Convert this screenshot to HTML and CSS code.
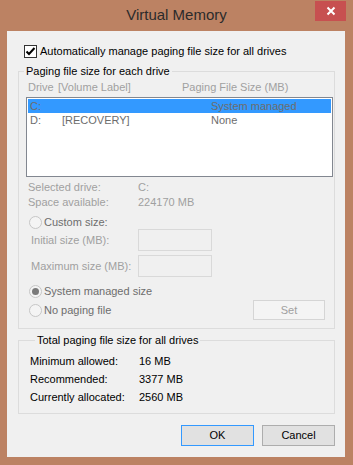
FILE: index.html
```html
<!DOCTYPE html>
<html lang="en">
<head>
    <meta charset="UTF-8">
    <meta name="viewport" content="width=device-width, initial-scale=1.0">
    <title>Virtual Memory</title>
    <link rel="stylesheet" href="styles.css">
</head>
<body>
    <div class="window">
        <div class="titlebar">
            <span></span>
            <h1 class="title">Virtual Memory</h1>
            <button class="close-btn" aria-label="Close">
                <svg width="10" height="10" viewBox="0 0 10 10">
                    <path d="M1.5 1.5 L8.5 8.5 M8.5 1.5 L1.5 8.5" stroke="#fff" stroke-width="2" fill="none"/>
                </svg>
            </button>
        </div>
        <div class="client">
            <label class="check-row">
                <span class="checkbox">
                    <svg width="11" height="11" viewBox="0 0 11 11">
                        <path d="M1.5 5.5 L4 8 L9.5 2" stroke="#000" stroke-width="2" fill="none"/>
                    </svg>
                </span>
                Automatically manage paging file size for all drives
            </label>

            <fieldset class="group">
                <legend>Paging file size for each drive</legend>
                <div class="list-header">
                    <span>Drive</span>
                    <span>[Volume Label]</span>
                    <span>Paging File Size (MB)</span>
                </div>
                <ul class="drive-list">
                    <li class="selected"><span>C:</span><span></span><span>System managed</span></li>
                    <li><span>D:</span><span>[RECOVERY]</span><span>None</span></li>
                </ul>
                <div class="info-row"><span>Selected drive:</span><span>C:</span></div>
                <div class="info-row"><span>Space available:</span><span>224170 MB</span></div>

                <div class="radio-row custom-row"><span class="radio"></span>Custom size:</div>
                <div class="size-row"><span>Initial size (MB):</span><span class="textbox"></span></div>
                <div class="size-row max-row"><span>Maximum size (MB):</span><span class="textbox"></span></div>

                <div class="radio-row managed-row"><span class="radio checked"></span>System managed size</div>
                <div class="radio-row last-row">
                    <span class="radio"></span>No paging file
                    <button class="btn set-btn" disabled>Set</button>
                </div>
            </fieldset>

            <fieldset class="group totals">
                <legend>Total paging file size for all drives</legend>
                <div class="total-row"><span>Minimum allowed:</span><span>16 MB</span></div>
                <div class="total-row"><span>Recommended:</span><span>3377 MB</span></div>
                <div class="total-row"><span>Currently allocated:</span><span>2560 MB</span></div>
            </fieldset>

            <div class="actions">
                <button class="btn ok-btn">OK</button>
                <button class="btn">Cancel</button>
            </div>
        </div>
    </div>
</body>
</html>
```

FILE: styles.css
```css
body {
    margin: 0;
    font-family: 'Liberation Sans', Arial, sans-serif;
    font-size: 11px;
    line-height: 15px;
    color: #000;
}
.window {
    width: 353px;
    height: 465px;
    background-color: #bc8263;
    display: flex;
    flex-direction: column;
}
.titlebar {
    flex-shrink: 0;
    height: 31px;
    display: grid;
    grid-template-columns: 1fr auto 1fr;
    align-items: start;
}
.title {
    margin: 0;
    padding-top: 5px;
    font-size: 15px;
    line-height: 19px;
    font-weight: 400;
    color: #2b2b2b;
}
.close-btn {
    justify-self: end;
    width: 31px;
    height: 20px;
    margin: 1px 7px 0 0;
    padding: 0;
    border: none;
    background-color: #c75050;
    display: flex;
    align-items: center;
    justify-content: center;
}
.client {
    flex: 1;
    margin: 0 8px 8px 7px;
    background-color: #f0f0f0;
    padding: 13px 10px 11px 11px;
    display: flex;
    flex-direction: column;
}
.check-row {
    display: flex;
    align-items: center;
    gap: 3px;
    padding-left: 6px;
    height: 15px;
}
.checkbox {
    width: 11px;
    height: 11px;
    border: 1px solid #333;
    background-color: #fff;
    display: flex;
}
.group {
    margin: 5px 0 0 0;
    padding: 1px 0 8px 0;
    border: 1px solid #dcdcdc;
    min-inline-size: 0;
}
.group legend {
    margin-left: 5px;
    padding: 0 2px;
    line-height: 15px;
}
.list-header {
    display: grid;
    grid-template-columns: 30px 124px auto;
    padding-left: 9px;
    color: #a0a0a0;
}
.drive-list {
    list-style: none;
    margin: 2px 1px 0 7px;
    padding: 1px;
    height: 76px;
    border: 1px solid #828790;
    background-color: #fff;
    color: #6d6d6d;
}
.drive-list li {
    display: grid;
    grid-template-columns: 32px 149px auto;
    padding-left: 2px;
    height: 14px;
    line-height: 14px;
}
.drive-list li.selected {
    background-color: #3399ff;
}
.info-row {
    display: grid;
    grid-template-columns: 110px auto;
    padding-left: 9px;
    color: #a0a0a0;
}
.drive-list + .info-row {
    margin-top: 3px;
}
.radio-row {
    display: flex;
    align-items: center;
    gap: 2px;
    padding-left: 10px;
    height: 14px;
    color: #6d6d6d;
}
.radio {
    width: 11px;
    height: 11px;
    border: 1px solid #c6c6c6;
    border-radius: 50%;
    background-color: #f4f4f4;
    display: flex;
    align-items: center;
    justify-content: center;
}
.radio.checked::after {
    content: "";
    width: 7px;
    height: 7px;
    border-radius: 50%;
    background-color: #7a7a7a;
}
.custom-row {
    margin-top: 5px;
}
.size-row {
    display: grid;
    grid-template-columns: 107px 74px;
    align-items: center;
    padding-left: 12px;
    color: #a0a0a0;
}
.max-row {
    margin-top: 4px;
}
.textbox {
    height: 20px;
    border: 1px solid #d9d9d9;
    background-color: #f0f0f0;
}
.managed-row {
    margin-top: 7px;
}
.last-row {
    margin-top: 2px;
    height: 20px;
}
.btn {
    font-family: inherit;
    font-size: 11px;
    line-height: 15px;
    width: 73px;
    height: 21px;
    padding: 0;
    border: 1px solid #adadad;
    background-color: #e1e1e1;
    color: #000;
}
.set-btn {
    margin-left: auto;
    margin-right: 9px;
    width: 72px;
    height: 20px;
    border-color: #d5d5d5;
    background-color: #f4f4f4;
    color: #a0a0a0;
}
.totals {
    margin-top: 4px;
    padding: 4px 0 7px 11px;
}
.total-row {
    display: grid;
    grid-template-columns: 109px auto;
    height: 18px;
    line-height: 18px;
}
.actions {
    display: flex;
    justify-content: flex-end;
    gap: 8px;
    margin-top: 11px;
}
.ok-btn {
    border-color: #3399ff;
}
```
